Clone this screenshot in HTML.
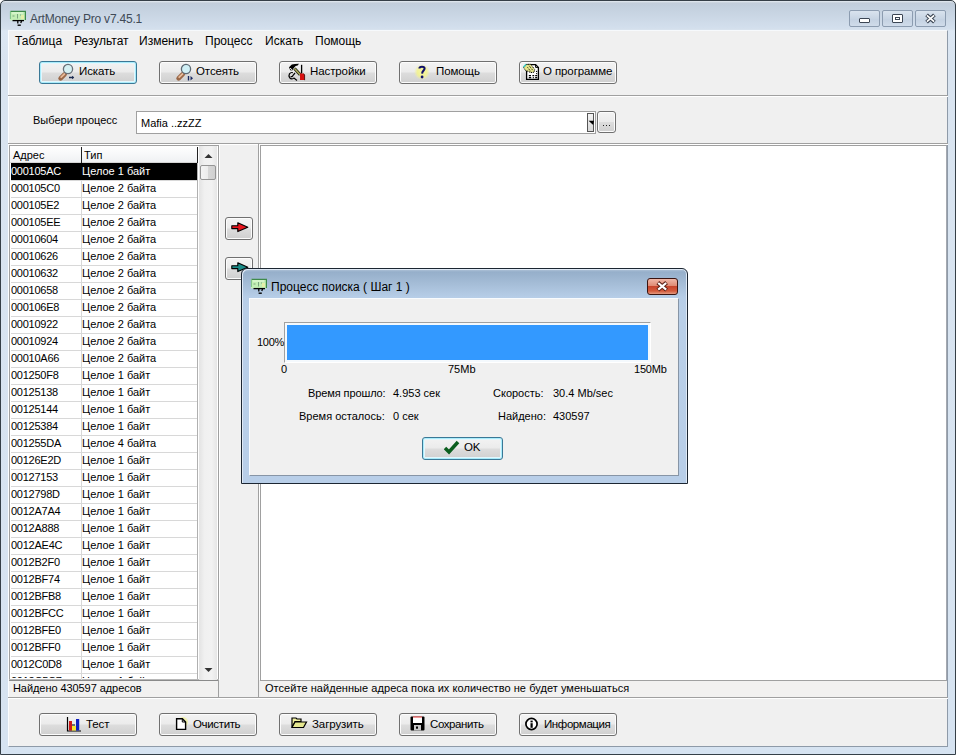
<!DOCTYPE html>
<html><head><meta charset="utf-8">
<style>
*{box-sizing:border-box;margin:0;padding:0}
html,body{width:956px;height:755px;overflow:hidden;background:#fff}
body{position:relative;font-family:"Liberation Sans",sans-serif;font-size:11px;color:#000}
.a{position:absolute}
.t{position:absolute;white-space:pre;line-height:1}
#win{left:0;top:0;width:956px;height:755px;border:1px solid #353f47;border-radius:5px 5px 0 0;
 background:linear-gradient(to bottom,#e6ecf2 0px,#c3ceda 2px,#c2cfdd 4px,#d3dfed 27px,#d5e0ec 28px,#dce7f3 30px,#d9e4f0 60px,#d6e3f1 755px)}
#client{left:8px;top:30px;width:940px;height:717px;background:#f0f0f0;border-top:1px solid #f6f9fc;border-left:1px solid #fbfdff;border-right:1px solid #8e9aa8;border-bottom:1px solid #8e9aa8}
.cap{top:10px;height:17px;border:1px solid #8c9cb0;border-radius:2px;background:linear-gradient(#d9e3ee,#c8d5e4 50%,#c3d1e1 51%,#d0dcea)}
.btn{position:absolute;height:23px;border:1px solid #707070;border-radius:3px;
 background:linear-gradient(#f3f3f3 0%,#ebebeb 48%,#dddddd 52%,#cfcfcf 100%);box-shadow:inset 0 0 0 1px #fcfcfc}
.btn.def{border-color:#3a7896;box-shadow:inset 0 0 0 1px #a9ecfb, inset 0 0 0 2px #e4f6fc}
.btn .t{top:4px;font-size:11.5px;letter-spacing:-0.1px}
.row{position:absolute;left:0;width:187px;height:17px;border-top:1px solid #d8d8d8}
.row.sel{background:#000;color:#fff;border-top-color:#000}
.c1{left:0px;top:2px;letter-spacing:-0.25px}.c2{left:71px;top:2px}
.hl{position:absolute;height:1px;background:#a0a0a0}
.vl{position:absolute;width:1px;background:#a0a0a0}
</style></head><body>
<div id="win" class="a"></div>
<!-- title -->
<svg class="a" style="left:8px;top:8px" width="20" height="20" viewBox="0 0 20 20">
 <rect x="2" y="3" width="15.6" height="9.4" fill="#c2eeb4"/>
 <path d="M2.4 3.4 H17.4 V12" stroke="#3e8a4a" stroke-width="1.2" fill="none"/>
 <path d="M2.4 3.4 V11" stroke="#7cc088" stroke-width="1" fill="none"/>
 <path d="M4 5 H15" stroke="#e8fbe0" stroke-width="1"/>
 <path d="M4.5 8 H6.5 M9.5 6 V10.5 M12 7 H13" stroke="#7aa47e" stroke-width="1"/>
 <rect x="13" y="7" width="3" height="4" fill="#e4f0a8"/>
 <path d="M4.5 12.6 H16" stroke="#000" stroke-width="1.3"/>
 <path d="M9.8 12.6 V15.4 M13.6 12.6 L12.8 15" stroke="#000" stroke-width="1.3"/>
 <path d="M9.6 17.2 H12.8" stroke="#000" stroke-width="1.4"/>
</svg>
<div class="t" style="left:30px;top:13px;font-size:12px;letter-spacing:-0.2px;color:#404a56">ArtMoney Pro v7.45.1</div>
<div class="a cap" style="left:849px;width:31px"></div>
<div class="a cap" style="left:882px;width:31px"></div>
<div class="a cap" style="left:915px;width:31px"></div>
<div class="a" style="left:859px;top:18px;width:11px;height:5px;border:1px solid #3c4654;background:#fff;border-radius:1px"></div>
<div class="a" style="left:892px;top:14px;width:11px;height:9px;border:1px solid #3c4654;background:#fff;border-radius:1px"></div>
<div class="a" style="left:895px;top:17px;width:5px;height:3px;border:1px solid #3c4654"></div>
<svg class="a" style="left:924px;top:13px" width="13" height="11" viewBox="0 0 13 11"><path d="M2.6 1.8 L10.4 9.2 M10.4 1.8 L2.6 9.2" stroke="#3c4654" stroke-width="3.8" stroke-linecap="butt" fill="none"/><path d="M2.9 2.3 L10.1 8.7 M10.1 2.3 L2.9 8.7" stroke="#fff" stroke-width="1.7" stroke-linecap="butt" fill="none"/></svg>

<div id="client" class="a"></div>
<!-- menu -->
<div class="t" style="left:15px;top:35px;font-size:12px">Таблица</div>
<div class="t" style="left:74px;top:35px;font-size:12px">Результат</div>
<div class="t" style="left:139px;top:35px;font-size:12px">Изменить</div>
<div class="t" style="left:205px;top:35px;font-size:12px">Процесс</div>
<div class="t" style="left:265px;top:35px;font-size:12px">Искать</div>
<div class="t" style="left:315px;top:35px;font-size:12px">Помощь</div>

<!-- toolbar -->
<div class="btn def" style="left:39px;top:61px;width:98px"><div class="t" style="left:39px">Искать</div></div>
<div class="btn" style="left:159px;top:61px;width:98px"><div class="t" style="left:36px">Отсеять</div></div>
<div class="btn" style="left:279px;top:61px;width:98px"><div class="t" style="left:30px">Настройки</div></div>
<div class="btn" style="left:399px;top:61px;width:98px"><div class="t" style="left:36px">Помощь</div></div>
<div class="btn" style="left:519px;top:61px;width:98px"><div class="t" style="left:23px">О программе</div></div>

<div class="hl" style="left:8px;top:95px;width:940px"></div>
<div class="a" style="left:8px;top:96px;width:940px;height:1px;background:#fff"></div>

<!-- process -->
<div class="t" style="left:33px;top:115px">Выбери процесс</div>
<div class="a" style="left:136px;top:111px;width:460px;height:23px;background:#fff;border:1px solid #a0a0a0"></div>
<div class="t" style="left:141px;top:118px">Mafia ..zzZZ</div>
<div class="a" style="left:587px;top:113px;width:7px;height:19px;border:1px solid #555;background:linear-gradient(#f4f4f4,#d8d8d8)"></div>
<div class="btn" style="left:597px;top:111px;width:19px;height:22px"></div>
<svg class="a" style="left:586px;top:118px" width="10" height="10" viewBox="0 0 10 10"><path d="M2.6 2.8 H8 L7.2 7 Z" fill="#000"/></svg>
<div class="a" style="left:603px;top:125px;width:1px;height:1px;background:#222"></div>
<div class="a" style="left:606px;top:125px;width:1px;height:1px;background:#222"></div>
<div class="a" style="left:609px;top:125px;width:1px;height:1px;background:#222"></div>

<div class="hl" style="left:8px;top:143px;width:940px"></div>
<div class="a" style="left:8px;top:144px;width:940px;height:1px;background:#fff"></div>


<!-- left list panel -->
<div class="a" style="left:9px;top:145px;width:210px;height:536px;border:1px solid #a0a0a0;border-bottom-color:#8a8a8a;background:#fff"></div>
<div class="a" style="left:9px;top:679px;width:210px;height:1px;background:#b8b8b8"></div>
<div class="vl" style="left:218px;top:680px;height:17px"></div>
<div class="a" id="hdr" style="left:10px;top:146px;width:188px;height:17px;background:linear-gradient(#ffffff,#f7f8f9 50%,#eef0f2);overflow:hidden">
 <div class="t" style="left:3px;top:4px">Адрес</div>
 <div class="t" style="left:74px;top:4px">Тип</div>
</div>
<div class="a" style="left:10px;top:162px;width:187px;height:1px;background:#d5d5d5"></div>
<div class="a" style="left:81px;top:147px;width:1px;height:16px;background:#222"></div>
<div class="a" style="left:197px;top:147px;width:1px;height:16px;background:#222"></div>
<div class="a" id="rows" style="left:11px;top:163px;width:186px;height:515px;overflow:hidden">
<div class="row sel" style="top:0px"><div class="t c1">000105AC</div><div class="t c2">Целое 1 байт</div></div>
<div class="row" style="top:17px"><div class="t c1">000105C0</div><div class="t c2">Целое 2 байта</div></div>
<div class="row" style="top:34px"><div class="t c1">000105E2</div><div class="t c2">Целое 2 байта</div></div>
<div class="row" style="top:51px"><div class="t c1">000105EE</div><div class="t c2">Целое 2 байта</div></div>
<div class="row" style="top:68px"><div class="t c1">00010604</div><div class="t c2">Целое 2 байта</div></div>
<div class="row" style="top:85px"><div class="t c1">00010626</div><div class="t c2">Целое 2 байта</div></div>
<div class="row" style="top:102px"><div class="t c1">00010632</div><div class="t c2">Целое 2 байта</div></div>
<div class="row" style="top:119px"><div class="t c1">00010658</div><div class="t c2">Целое 2 байта</div></div>
<div class="row" style="top:136px"><div class="t c1">000106E8</div><div class="t c2">Целое 2 байта</div></div>
<div class="row" style="top:153px"><div class="t c1">00010922</div><div class="t c2">Целое 2 байта</div></div>
<div class="row" style="top:170px"><div class="t c1">00010924</div><div class="t c2">Целое 2 байта</div></div>
<div class="row" style="top:187px"><div class="t c1">00010A66</div><div class="t c2">Целое 2 байта</div></div>
<div class="row" style="top:204px"><div class="t c1">001250F8</div><div class="t c2">Целое 1 байт</div></div>
<div class="row" style="top:221px"><div class="t c1">00125138</div><div class="t c2">Целое 1 байт</div></div>
<div class="row" style="top:238px"><div class="t c1">00125144</div><div class="t c2">Целое 1 байт</div></div>
<div class="row" style="top:255px"><div class="t c1">00125384</div><div class="t c2">Целое 1 байт</div></div>
<div class="row" style="top:272px"><div class="t c1">001255DA</div><div class="t c2">Целое 4 байта</div></div>
<div class="row" style="top:289px"><div class="t c1">00126E2D</div><div class="t c2">Целое 1 байт</div></div>
<div class="row" style="top:306px"><div class="t c1">00127153</div><div class="t c2">Целое 1 байт</div></div>
<div class="row" style="top:323px"><div class="t c1">0012798D</div><div class="t c2">Целое 1 байт</div></div>
<div class="row" style="top:340px"><div class="t c1">0012A7A4</div><div class="t c2">Целое 1 байт</div></div>
<div class="row" style="top:357px"><div class="t c1">0012A888</div><div class="t c2">Целое 1 байт</div></div>
<div class="row" style="top:374px"><div class="t c1">0012AE4C</div><div class="t c2">Целое 1 байт</div></div>
<div class="row" style="top:391px"><div class="t c1">0012B2F0</div><div class="t c2">Целое 1 байт</div></div>
<div class="row" style="top:408px"><div class="t c1">0012BF74</div><div class="t c2">Целое 1 байт</div></div>
<div class="row" style="top:425px"><div class="t c1">0012BFB8</div><div class="t c2">Целое 1 байт</div></div>
<div class="row" style="top:442px"><div class="t c1">0012BFCC</div><div class="t c2">Целое 1 байт</div></div>
<div class="row" style="top:459px"><div class="t c1">0012BFE0</div><div class="t c2">Целое 1 байт</div></div>
<div class="row" style="top:476px"><div class="t c1">0012BFF0</div><div class="t c2">Целое 1 байт</div></div>
<div class="row" style="top:493px"><div class="t c1">0012C0D8</div><div class="t c2">Целое 1 байт</div></div>
<div class="row" style="top:510px"><div class="t c1">0012C5C7</div><div class="t c2">Целое 1 байт</div></div>
</div>
<div class="a" style="left:81px;top:180px;width:1px;height:500px;background:#d8d8d8"></div>
<div class="a" style="left:197px;top:163px;width:1px;height:516px;background:#b0b0b0"></div>
<!-- scrollbar -->
<div class="a" style="left:199px;top:146px;width:18px;height:534px;background:linear-gradient(to right,#e3e3e3,#f0f0f0 30%,#f2f2f2 70%,#e6e6e6)"></div>
<svg class="a" style="left:204px;top:153px" width="9" height="6" viewBox="0 0 9 6"><path d="M0.5 5 L4.5 1 L8.5 5 Z" fill="#333"/></svg>
<svg class="a" style="left:204px;top:667px" width="9" height="6" viewBox="0 0 9 6"><path d="M0.5 1 L4.5 5 L8.5 1 Z" fill="#333"/></svg>
<div class="a" style="left:200px;top:165px;width:16px;height:15px;border:1px solid #959595;border-radius:2px;background:linear-gradient(to right,#f4f4f4,#ececec 50%,#d7d7d7 52%,#d0d0d0)"></div>


<!-- toolbar icons -->
<svg class="a" style="left:56px;top:62px" width="20" height="20" viewBox="0 0 20 20">
 <path d="M4.6 16.4 L8.6 12.4" stroke="#9a6848" stroke-width="4.6" stroke-linecap="round"/>
 <path d="M5.2 15.2 L8.4 12" stroke="#e6b898" stroke-width="1.8" stroke-linecap="round"/>
 <circle cx="12" cy="7" r="4.6" fill="#d6f0f2" stroke="#687078" stroke-width="1.3"/>
 <path d="M13 15.5 H17.5" stroke="#1a2a50" stroke-width="1.5"/>
 <path d="M16 13.8 L18.2 15.5 L16 17.2 Z" fill="#1a2a50"/>
</svg>
<svg class="a" style="left:174px;top:62px" width="20" height="20" viewBox="0 0 20 20">
 <path d="M4.6 16.4 L8.8 12.2" stroke="#9a6848" stroke-width="4.6" stroke-linecap="round"/>
 <path d="M5.2 15.2 L8.6 11.8" stroke="#e8bc9c" stroke-width="1.8" stroke-linecap="round"/>
 <circle cx="12" cy="7" r="4.6" fill="#d0f0f6" stroke="#5e6a74" stroke-width="1.3"/>
 <path d="M14.5 14 V18.5" stroke="#1a2a60" stroke-width="1.4"/>
 <path d="M16.5 14 L19 16.3 L16.5 18.6 Z" fill="#1a2a60"/>
</svg>
<svg class="a" style="left:286px;top:61px" width="24" height="24" viewBox="0 0 24 24">
 <path d="M8.5 7.5 L14.2 13.8" stroke="#1a1a10" stroke-width="3.2"/>
 <path d="M8.5 7.5 L14.2 13.8" stroke="#a8a858" stroke-width="1.6"/>
 <path d="M3 6.2 L5.8 3.6 L9 3 L13 2.8 L11.6 4.4 L9.6 5 L7.6 7.2 L6.2 9.6 L4.2 9.2 Z" fill="#000"/>
 <circle cx="4.6" cy="7.6" r="0.7" fill="#fff"/><circle cx="5.6" cy="8.6" r="0.6" fill="#fff"/>
 <path d="M6.8 11.6 C3.6 11 2.2 14 3.6 16.6 C4.8 18.4 7.2 18 8 17 L11 19.5 M4.6 15.4 C5.6 16 6.8 15.6 6.8 14.6 L9 12" stroke="#000" stroke-width="1.2" fill="none"/>
 <path d="M15.6 3.8 V12.6" stroke="#000" stroke-width="1.3"/>
 <path d="M14 12.6 H17.6 L18.6 14 V19 H14 Z" fill="#d81010"/>
 <path d="M17.6 12.6 L18.6 14 V19.2" stroke="#300" stroke-width="0.8" fill="none"/>
</svg>
<svg class="a" style="left:413px;top:63px" width="18" height="18" viewBox="0 0 18 18">
 <defs><radialGradient id="yg"><stop offset="0" stop-color="#f6f6a0"/><stop offset="0.6" stop-color="#f2f290" stop-opacity="0.9"/><stop offset="1" stop-color="#f0f0a0" stop-opacity="0"/></radialGradient></defs>
 <circle cx="9" cy="9" r="8" fill="url(#yg)"/>
 <path d="M6.4 5.6 C6.4 3.2 11.6 3.2 11.6 5.6 C11.6 7.4 9.2 7.8 9.1 10.6" stroke="#10106a" stroke-width="2" fill="none"/>
 <circle cx="9.1" cy="14" r="1.4" fill="#10106a"/>
</svg>
<svg class="a" style="left:520px;top:61px" width="24" height="24" viewBox="0 0 24 24">
 <path d="M6.6 3.6 H15.6 L18.4 6.4 V18.4 H6.6 Z" fill="#fff" stroke="#000" stroke-width="1.3"/>
 <path d="M15.6 3.6 V6.4 H18.4" stroke="#000" stroke-width="1" fill="none"/>
 <circle cx="16.6" cy="10.4" r="0.65" fill="#000"/><circle cx="16.6" cy="12.6" r="0.65" fill="#000"/>
 <path d="M8.8 14.6 H11 M12.4 14.6 H14.2 M15.2 14.6 H17.2 M8.8 16.6 H11.2 M12.8 16.6 H13.8 M15.2 16.6 H17.2" stroke="#000" stroke-width="1.1"/>
 <path d="M3.6 6.6 L6.6 3.4 L10.6 3.2 L14.6 8.4 L14.2 11.2 L10.6 11.6 L8.4 10.4 L5.6 9.6 Z" fill="#e6e68a"/>
 <path d="M3.6 6.6 L6.6 3.4 L10.6 3.2 L14.6 8.4 L14.2 11.2 L10.6 11.6 L8.4 10.4 L5.6 9.6 Z" fill="none" stroke="#000" stroke-width="1" stroke-dasharray="1.2 0.8"/>
 <path d="M9.2 4.8 L13 9.6 M7.6 6.4 L11 10.8" stroke="#000" stroke-width="1" stroke-dasharray="1 1"/>
 <path d="M3.4 6.2 L6.2 3.2" stroke="#40c8c0" stroke-width="1.4"/>
</svg>
<!-- status left -->
<div class="a" style="left:10px;top:681px;width:208px;height:16px;background:#f2f1f0"></div>
<div class="t" style="left:13px;top:683px;letter-spacing:-0.07px">Найдено 430597 адресов</div>

<!-- middle column -->
<div class="a" style="left:219px;top:145px;width:1px;height:535px;background:#fff"></div>
<div class="vl" style="left:258px;top:144px;height:553px"></div>
<div class="btn" style="left:225px;top:217px;width:28px;height:23px"></div>
<svg class="a" style="left:231px;top:221px" width="18" height="13" viewBox="0 0 18 13"><path d="M0.8 4.8 H6.8 V1.8 L16.8 6.2 L6.8 10.6 V7.6 H0.8 Z" fill="#e8141c" stroke="#000" stroke-width="1.1" stroke-linejoin="round"/></svg>
<div class="btn" style="left:225px;top:257px;width:28px;height:23px"></div>
<svg class="a" style="left:231px;top:261px" width="18" height="13" viewBox="0 0 18 13"><path d="M0.8 4.8 H6.8 V1.8 L16.8 6.2 L6.8 10.6 V7.6 H0.8 Z" fill="#1a8c88" stroke="#000" stroke-width="1.1" stroke-linejoin="round"/></svg>

<!-- right panel -->
<div class="a" style="left:259px;top:144px;width:1px;height:536px;background:#fff"></div>
<div class="a" style="left:260px;top:145px;width:687px;height:536px;border:1px solid #a0a0a0;border-right-color:#a4a8b0;background:#fff"></div>
<div class="a" style="left:261px;top:681px;width:686px;height:16px;background:#f2f1f0"></div>
<div class="t" style="left:265px;top:683px;letter-spacing:0.05px">Отсейте найденные адреса пока их количество не будет уменьшаться</div>
<div class="hl" style="left:8px;top:697px;width:940px"></div>
<div class="a" style="left:8px;top:698px;width:940px;height:1px;background:#fff"></div>

<!-- bottom toolbar -->
<div class="btn" style="left:39px;top:713px;width:98px"><div class="t" style="left:46px;top:5px">Тест</div></div>
<div class="btn" style="left:159px;top:713px;width:98px"><div class="t" style="left:33px;top:5px;letter-spacing:-0.35px">Очистить</div></div>
<div class="btn" style="left:279px;top:713px;width:98px"><div class="t" style="left:32px;top:5px">Загрузить</div></div>
<div class="btn" style="left:399px;top:713px;width:98px"><div class="t" style="left:30px;top:5px;letter-spacing:-0.4px">Сохранить</div></div>
<div class="btn" style="left:519px;top:713px;width:98px"><div class="t" style="left:24px;top:5px;letter-spacing:-0.4px">Информация</div></div>

<!-- bottom icons -->
<svg class="a" style="left:66px;top:717px" width="16" height="15" viewBox="0 0 16 15">
 <path d="M1.5 0 V14 H15" stroke="#000" stroke-width="1.2" fill="none"/>
 <rect x="3" y="4" width="3" height="9.5" fill="#d01818"/>
 <rect x="6" y="9" width="4" height="4.5" fill="#f8e830"/>
 <path d="M6 8 H9" stroke="#000" stroke-width="1"/>
 <rect x="10" y="2" width="3.2" height="11.5" fill="#1020c0"/>
</svg>
<svg class="a" style="left:175px;top:716px" width="13" height="16" viewBox="0 0 13 16">
 <circle cx="8" cy="6" r="5" fill="#f0f080" opacity="0.55"/>
 <path d="M1.6 2.8 H7.4 L10.6 6 V13.4 H1.6 Z" fill="#fff" stroke="#000" stroke-width="1.4"/>
 <path d="M7.3 3 V6 H10.5" stroke="#000" stroke-width="1" fill="none"/>
</svg>
<svg class="a" style="left:291px;top:716px" width="17" height="14" viewBox="0 0 17 14">
 <path d="M1 2 H5 L6 3 H10 V5.5 H4 L1 11.5 Z" fill="#f0f0a0" stroke="#000" stroke-width="1.2"/>
 <path d="M1 11.5 L4 6 H15.5 L12.5 11.5 Z" fill="#e6e890" stroke="#000" stroke-width="1.2"/>
</svg>
<svg class="a" style="left:409px;top:715px" width="17" height="17" viewBox="0 0 17 17">
 <path d="M1.5 2.5 Q1.5 1.5 2.5 1.5 H14.5 Q15.5 1.5 15.5 2.5 V14.5 Q15.5 15.5 14.5 15.5 H2.5 Q1.5 15.5 1.5 14.5 Z" fill="#000"/>
 <rect x="4" y="1.6" width="9" height="6.4" fill="#fff"/>
 <path d="M4 2 H13" stroke="#e03030" stroke-width="1"/>
 <rect x="5" y="10" width="7" height="5.5" fill="#c8c8c8"/>
 <rect x="7" y="11.5" width="2" height="2.2" fill="#000"/>
</svg>
<svg class="a" style="left:524px;top:716px" width="16" height="16" viewBox="0 0 16 16">
 <circle cx="7.5" cy="8" r="5.6" fill="#fff" stroke="#000" stroke-width="1.7"/>
 <rect x="6.5" y="4.6" width="2.2" height="1.8" fill="#000"/>
 <rect x="6.5" y="7.2" width="2.2" height="4.6" fill="#000"/>
</svg>


<!-- dialog -->
<div class="a" id="dlg" style="left:241px;top:268px;width:447px;height:216px;border:1px solid #1c2632;border-radius:6px 6px 0 0;
 background:linear-gradient(#b4c6da 0px,#96afca 3px,#a4bcd6 14px,#b6cde7 28px,#b9cfe8 40px,#b8cee8 100%);box-shadow:inset 1px 1px 0 #dfe9f5, inset -1px 0 0 #dfe9f5"></div>
<svg class="a" style="left:249px;top:276px" width="20" height="20" viewBox="0 0 20 20">
 <rect x="2" y="3" width="15.6" height="9.4" fill="#c2eeb4"/>
 <path d="M2.4 3.4 H17.4 V12" stroke="#3e8a4a" stroke-width="1.2" fill="none"/>
 <path d="M2.4 3.4 V11" stroke="#7cc088" stroke-width="1" fill="none"/>
 <path d="M4 5 H15" stroke="#e8fbe0" stroke-width="1"/>
 <path d="M4.5 8 H6.5 M9.5 6 V10.5 M12 7 H13" stroke="#7aa47e" stroke-width="1"/>
 <rect x="13" y="7" width="3" height="4" fill="#e4f0a8"/>
 <path d="M4.5 12.6 H16" stroke="#000" stroke-width="1.3"/>
 <path d="M9.8 12.6 V15.4 M13.6 12.6 L12.8 15" stroke="#000" stroke-width="1.3"/>
 <path d="M9.6 17.2 H12.8" stroke="#000" stroke-width="1.4"/>
</svg>
<div class="t" style="left:271px;top:281px;font-size:12px;color:#000">Процесс поиска ( Шаг 1 )</div>
<div class="a" style="left:647px;top:278px;width:31px;height:17px;border:1px solid #3a1410;border-radius:3px;background:linear-gradient(#f0b8a8,#e08b74 45%,#c8452c 50%,#d35a3c 80%,#e49a80)"></div>
<svg class="a" style="left:655px;top:280px" width="15" height="13" viewBox="0 0 15 13"><path d="M2.8 2.6 L11.6 10 M11.6 2.6 L2.8 10" stroke="#5a1e14" stroke-width="4.2" fill="none"/><path d="M3.2 3 L11.2 9.6 M11.2 3 L3.2 9.6" stroke="#fff" stroke-width="2.2" fill="none"/></svg>
<div class="a" style="left:249px;top:298px;width:430px;height:178px;background:#f0f0f0;border-top:1px solid #f8fbfe;border-left:1px solid #f8fbfe;border-right:1px solid #8795a6;border-bottom:1px solid #8795a6"></div>
<div class="a" style="left:284px;top:322px;width:367px;height:41px;border-top:1px solid #a0a0a0;border-left:1px solid #a0a0a0;border-right:1px solid #fff;border-bottom:1px solid #fff;background:#f4f9fd"></div>
<div class="a" style="left:287px;top:325px;width:361px;height:35px;background:#3399ff"></div>
<div class="t" style="left:257px;top:337px;letter-spacing:-0.3px">100%</div>
<div class="t" style="left:281px;top:364px">0</div>
<div class="t" style="left:448px;top:364px">75Mb</div>
<div class="t" style="left:634px;top:364px;letter-spacing:-0.2px">150Mb</div>
<div class="t" style="left:308px;top:388px;letter-spacing:-0.1px">Время прошло:</div>
<div class="t" style="left:393px;top:388px">4.953 сек</div>
<div class="t" style="left:299px;top:411px">Время осталось:</div>
<div class="t" style="left:393px;top:411px">0 сек</div>
<div class="t" style="left:493px;top:388px">Скорость:</div>
<div class="t" style="left:553px;top:388px">30.4 Mb/sec</div>
<div class="t" style="left:498px;top:411px">Найдено:</div>
<div class="t" style="left:553px;top:411px">430597</div>
<div class="btn def" style="left:422px;top:437px;width:81px"><div class="t" style="left:41px">OK</div></div>
<svg class="a" style="left:444px;top:440px" width="16" height="15" viewBox="0 0 16 15"><path d="M1 8 L5 12 L14 2" stroke="#0b5e1e" stroke-width="3.5" fill="none"/></svg>

</body></html>
